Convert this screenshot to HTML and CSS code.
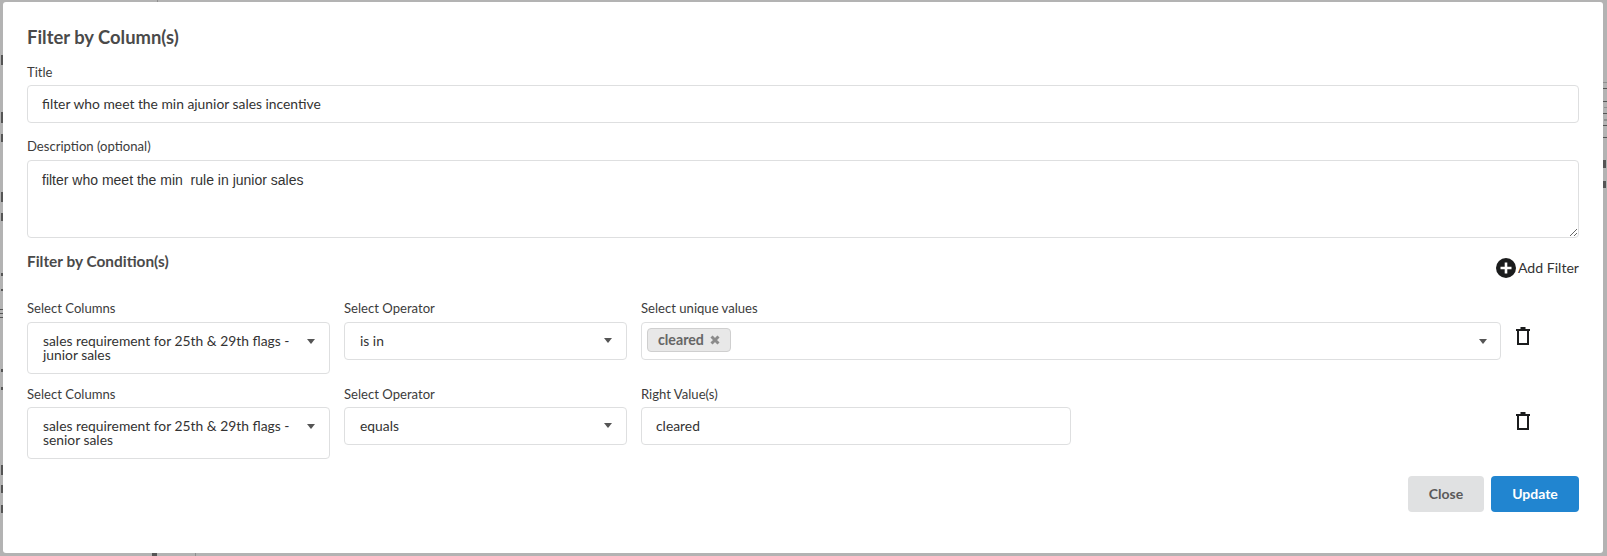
FILE: index.html
```html
<!DOCTYPE html>
<html lang="en">
<head>
<meta charset="utf-8">
<title>Filter by Column(s)</title>
<link rel="stylesheet" href="styles.css">
</head>
<body>
<svg class="backdrop" viewBox="0 0 1607 556" width="1607" height="556" aria-hidden="true">
  <g fill="#555">
    <rect x="1" y="55" width="2" height="10"/>
    <rect x="1" y="112" width="2" height="11"/>
    <rect x="1" y="134" width="2" height="8"/>
    <rect x="1" y="192" width="2" height="10"/>
    <rect x="1" y="213" width="2" height="8"/>
    <rect x="1" y="273" width="2" height="3"/>
    <rect x="1" y="289" width="2" height="2"/>
    <rect x="0" y="309" width="3" height="1"/>
    <rect x="0" y="313" width="3" height="1"/>
    <rect x="0" y="317" width="3" height="1"/>
    <rect x="1" y="369" width="2" height="3"/>
    <rect x="1" y="387" width="2" height="3"/>
    <rect x="1" y="465" width="2" height="10"/>
    <rect x="1" y="485" width="2" height="8"/>
    <rect x="1" y="505" width="2" height="8"/>
    <rect x="1603" y="88" width="4" height="1"/>
    <rect x="1603" y="101" width="4" height="1"/>
    <rect x="1603" y="113" width="4" height="1"/>
    <rect x="1603" y="125" width="4" height="1"/>
    <rect x="1603" y="137" width="4" height="1"/>
    <rect x="1603" y="160" width="3" height="8"/>
    <rect x="1603" y="181" width="3" height="7"/>
    <rect x="152" y="553" width="5" height="3"/>
  </g>
  <g fill="#8f8f8f">
    <rect x="1603" y="82" width="4" height="1"/>
    <rect x="1604" y="107" width="3" height="1"/>
    <rect x="1604" y="119" width="3" height="2"/>
    <rect x="157" y="0" width="1" height="2"/>
    <rect x="195" y="553" width="1" height="3"/>
  </g>
</svg>
<div class="modal">
  <h2 class="modal-title">Filter by Column(s)</h2>
  <div class="field">
    <label class="label">Title</label>
    <div class="input title-input">filter who meet the min ajunior sales incentive</div>
  </div>
  <div class="field desc-field">
    <label class="label">Description (optional)</label>
    <textarea class="textarea" rows="3">filter who meet the min  rule in junior sales</textarea>
  </div>
  <div class="cond-head">
    <h3 class="cond-title">Filter by Condition(s)</h3>
    <div class="add-filter">
      <svg class="add-icon" viewBox="0 0 20 20" width="20" height="20" aria-hidden="true"><circle cx="10" cy="10" r="10" fill="#1b1c1d"/><path d="M10 4.5v11M4.5 10h11" stroke="#fff" stroke-width="2.6"/></svg>
      <span>Add Filter</span>
    </div>
  </div>
  <div class="cond-row">
    <div class="col">
      <label class="label">Select Columns</label>
      <div class="select tall"><span class="select-text">sales requirement for 25th &amp; 29th flags - junior sales</span><i class="caret"></i></div>
    </div>
    <div class="col">
      <label class="label">Select Operator</label>
      <div class="select"><span class="select-text">is in</span><i class="caret"></i></div>
    </div>
    <div class="col">
      <label class="label">Select unique values</label>
      <div class="select multi"><span class="chip">cleared<svg class="chip-x" viewBox="0 0 10 10" width="10" height="10" aria-hidden="true"><path d="M1.5 1.5l7 7M8.5 1.5l-7 7" stroke="#8b8b8b" stroke-width="3"/></svg></span><i class="caret"></i></div>
    </div>
    <svg class="trash" viewBox="0 0 14 18" width="14" height="18" aria-hidden="true"><path d="M4.5 1h5M0 3h14" stroke="#1b1c1d" stroke-width="2"/><path d="M2 4v13h10V4" fill="none" stroke="#1b1c1d" stroke-width="2"/></svg>
  </div>
  <div class="cond-row second">
    <div class="col">
      <label class="label">Select Columns</label>
      <div class="select tall"><span class="select-text">sales requirement for 25th &amp; 29th flags - senior sales</span><i class="caret"></i></div>
    </div>
    <div class="col">
      <label class="label">Select Operator</label>
      <div class="select"><span class="select-text">equals</span><i class="caret"></i></div>
    </div>
    <div class="col right-col">
      <label class="label">Right Value(s)</label>
      <div class="input right-input">cleared</div>
    </div>
    <svg class="trash" viewBox="0 0 14 18" width="14" height="18" aria-hidden="true"><path d="M4.5 1h5M0 3h14" stroke="#1b1c1d" stroke-width="2"/><path d="M2 4v13h10V4" fill="none" stroke="#1b1c1d" stroke-width="2"/></svg>
  </div>
  <div class="actions">
    <button class="btn btn-close" type="button">Close</button>
    <button class="btn btn-update" type="button">Update</button>
  </div>
</div>
</body>
</html>
```
FILE: styles.css
```css
html, body { margin: 0; height: 100%; }
body {
  position: relative;
  background: #b3b3b3;
  font-family: Lato, "Liberation Sans", sans-serif;
  overflow: hidden;
  padding: 2px 4px 3px 3px;
  box-sizing: border-box;
  height: 556px;
}
.backdrop { position: absolute; left: 0; top: 0; display: block; }
.modal {
  position: relative;
  background: #fff;
  border-radius: 3px;
  height: 551px;
  box-sizing: border-box;
  padding: 24px 24px 0;
  color: #3f3f3f;
}
.modal-title { margin: 0; font-size: 18.4px; line-height: 22px; font-weight: 700; color: #4a4a4a; }
.field { margin-top: 16px; }
.desc-field { margin-top: 15px; }
.label { display: block; font-size: 13.1px; line-height: 16px; color: #3c3c3c; }
.input, .select, .textarea {
  box-sizing: border-box;
  border: 1px solid #dedfe0;
  border-radius: 4px;
  background: #fff;
}
.input { font-size: 13.85px; line-height: 18px; padding: 9px 14px; color: #333; height: 37.5px; }
.title-input { margin-top: 5px; }
.textarea {
  display: block;
  width: 100%;
  height: 78px;
  margin: 6px 0 0;
  padding: 10px 14px;
  font-family: "Liberation Sans", sans-serif;
  font-size: 14px;
  line-height: 18px;
  color: #333;
  resize: vertical;
  outline: none;
}
.cond-head { display: flex; justify-content: space-between; align-items: flex-start; margin-top: 14px; }
.cond-title { margin: 0; font-size: 15.4px; line-height: 18px; font-weight: 700; color: #4a4a4a; }
.add-filter { display: flex; align-items: center; gap: 2px; font-size: 14.1px; line-height: 20px; color: #333; margin-top: 6px; }
.add-icon { display: block; }
.cond-row {
  display: grid;
  grid-template-columns: 303px 283px 860px 14px;
  column-gap: 14px;
  align-items: start;
  margin-top: 22.3px;
}
.second { margin-top: 12px; }
.col { min-width: 0; }
.col .label { margin-bottom: 6px; }
.second .col .label { margin-bottom: 5px; }
.select {
  display: flex;
  align-items: center;
  justify-content: space-between;
  height: 38px;
  padding: 0 14px 0 15px;
  font-size: 13.85px;
  line-height: 14px;
  color: #333;
}
.tall { height: 52px; align-items: flex-start; padding-top: 11px; padding-right: 14px; }
.select-text { max-width: 250px; }
.tall .caret { margin-top: 5px; }
.caret { width: 0; height: 0; border: 4px solid transparent; border-top: 5px solid #555; border-bottom: 0; flex: none; }
.multi { padding-left: 5px; padding-right: 13px; align-items: flex-start; padding-top: 5px; }
.multi .caret { margin-top: 11px; }
.chip {
  display: inline-flex;
  align-items: center;
  gap: 6px;
  height: 24px;
  box-sizing: border-box;
  padding: 0 10px 0 10px;
  background: #e8e8e8;
  border: 1px solid #cfcfcf;
  border-radius: 4px;
  font-size: 14.2px;
  font-weight: 700;
  color: #666;
}
.chip-x { display: block; }
.right-col .right-input { width: 430px; height: 38px; padding: 9.5px 14px; }
.trash { margin-top: 27px; margin-left: 1px; display: block; }
.second .trash { margin-top: 26px; }
.actions { display: flex; justify-content: flex-end; gap: 7px; margin-top: 17px; }
.btn {
  height: 36px;
  border: 0;
  border-radius: 4px;
  font-family: inherit;
  font-size: 14px;
  font-weight: 700;
  padding: 0;
}
.btn-close { width: 76px; background: #e0e1e2; color: #5a5a5a; }
.btn-update { width: 88px; background: #2185d0; color: #fff; }
```
